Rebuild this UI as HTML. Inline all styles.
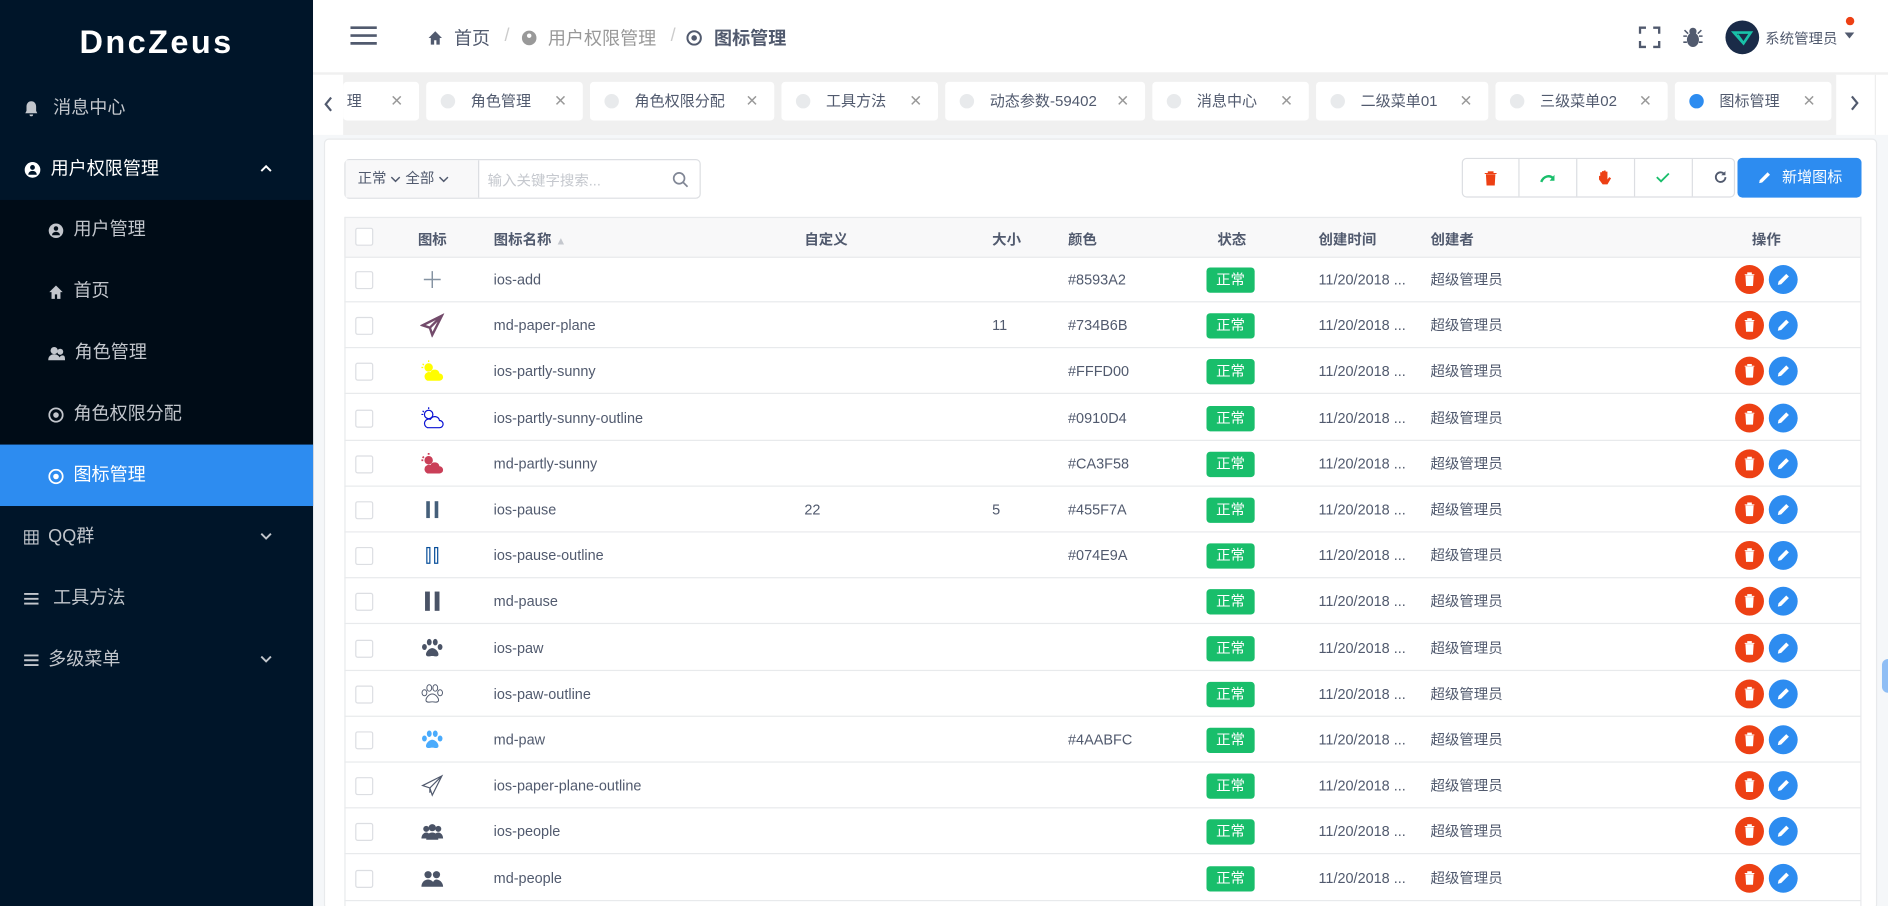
<!DOCTYPE html>
<html><head><meta charset="utf-8"><style>
*{box-sizing:border-box;margin:0;padding:0}
html,body{width:1888px;height:906px;overflow:hidden;background:#f5f7f9}
body{font-family:"Liberation Sans","Noto Sans CJK SC",sans-serif;color:#515a6e}
#w{width:1568px;height:752px;transform:scale(1.20408,1.2048);transform-origin:0 0;position:relative;background:#f5f7f9}
.abs{position:absolute}
#side{left:0;top:0;width:260px;height:752px;background:#001529}
.logo{position:absolute;top:20px;width:260px;text-align:center;color:#fff;font-weight:bold;font-size:27px;letter-spacing:2px}
.mi{position:absolute;left:0;width:260px;height:51px;line-height:51px;color:#c2c6cc;font-size:15px;padding-left:20px}
.mi svg{vertical-align:middle;margin-right:8px}
.sub{position:absolute;left:0;top:166px;width:260px;height:254px;background:#000c17}
.si{padding-left:40px}
.act{background:#2d8cf0;color:#fff}
.car{position:absolute;left:216px;top:21px;margin:0!important}
#hdr{left:260px;top:0;width:1308px;height:60px;background:#fff}
.bc{position:absolute;top:21px;font-size:15px;color:#515a6e}
#tags{left:260px;top:60px;width:1308px;height:52px;background:#f0f0f0}
.tab{position:absolute;top:8px;height:32px;background:#fff;border-radius:3px;font-size:12.5px;color:#515a6e;line-height:32px}
.tab .d{position:absolute;left:12px;top:10px;width:12px;height:12px;border-radius:50%;background:#e8eaec}
.tab .x{position:absolute;right:13px;top:0;color:#999;font-size:13px}
#card{left:269px;top:115px;width:1290px;height:640px;background:#fff;border:1px solid #e8eaec;border-radius:4px}
.th{position:absolute;font-size:12px;font-weight:bold;color:#515a6e}
.row{position:absolute;left:286px;width:1260px;height:38px;border-bottom:1px solid #e8eaec}
.c{position:absolute;top:0;line-height:38px;font-size:12px;color:#515a6e;white-space:nowrap}
.cb{position:absolute;left:9px;top:12px;width:15px;height:15px;border:1px solid #dcdee2;border-radius:2px;background:#fff}
.tag{position:absolute;left:716px;top:9px;width:40px;height:21px;background:#19be6b;color:#fff;font-size:12px;line-height:21px;text-align:center;border-radius:3px}
.bd,.be{position:absolute;top:7px;width:24px;height:24px;border-radius:50%}
.bd{left:1155px;background:#ed4014}.be{left:1183px;background:#2d8cf0}
.ic{position:absolute;left:63px;top:9px}
</style></head><body><div id="w">
<div id="side" class="abs">
<div class="logo">DncZeus</div>
<div class="mi" style="top:64px"><svg width="12" height="14" viewBox="0 0 12 14"><path d="M6 1c-2.5 0-4 2-4 4.5V9L1 11h10L10 9V5.5C10 3 8.5 1 6 1zM4.5 12a1.5 1.5 0 0 0 3 0z" fill="#c2c6cc"/></svg>&nbsp;消息中心</div>
<div class="mi" style="top:115px;color:#fff"><svg width="14" height="14" viewBox="0 0 14 14"><circle cx="7" cy="7" r="6.5" fill="#fff"/><circle cx="7" cy="5" r="2" fill="#001529"/><path d="M3.5 11c0-2 1.5-3.2 3.5-3.2s3.5 1.2 3.5 3.2z" fill="#001529"/></svg>用户权限管理<svg class="car" width="10" height="8" viewBox="0 0 10 8"><path d="M1 6l4-4 4 4" fill="none" stroke="#fff" stroke-width="1.6"/></svg></div>
<div class="sub"></div>
<div class="mi si" style="top:165px"><svg width="13" height="13" viewBox="0 0 14 14"><circle cx="7" cy="7" r="6.5" fill="#c2c6cc"/><circle cx="7" cy="5" r="2" fill="#000c17"/><path d="M3.5 11c0-2 1.5-3 3.5-3s3.5 1 3.5 3z" fill="#000c17"/></svg>用户管理</div>
<div class="mi si" style="top:216px"><svg width="13" height="13" viewBox="0 0 14 14"><path d="M7 1L1 7h2v6h3V9h2v4h3V7h2z" fill="#c2c6cc"/></svg>首页</div>
<div class="mi si" style="top:267px"><svg width="14" height="13" viewBox="0 0 14 13"><circle cx="5" cy="4" r="3" fill="#c2c6cc"/><circle cx="10" cy="5" r="2.5" fill="#c2c6cc"/><path d="M0 12c0-3 2-5 5-5s5 2 5 5zM9 12c0-2 1-4 3-4s2 2 2 4z" fill="#c2c6cc"/></svg>角色管理</div>
<div class="mi si" style="top:318px"><svg width="13" height="13" viewBox="0 0 14 14"><circle cx="7" cy="7" r="6" fill="none" stroke="#c2c6cc" stroke-width="1.6"/><circle cx="7" cy="7" r="2.5" fill="#c2c6cc"/></svg>角色权限分配</div>
<div class="mi si act" style="top:369px"><svg width="13" height="13" viewBox="0 0 14 14"><circle cx="7" cy="7" r="6" fill="none" stroke="#fff" stroke-width="1.6"/><circle cx="7" cy="7" r="2.5" fill="#fff"/></svg>图标管理</div>
<div class="mi" style="top:420px"><svg width="12" height="12" viewBox="0 0 12 12"><path d="M0.5 0.5h11v11h-11zM4 0.5v11M8 0.5v11M0.5 4h11M0.5 8h11" fill="none" stroke="#c2c6cc"/></svg>QQ群<svg class="car" width="10" height="8" viewBox="0 0 10 8"><path d="M1 2l4 4 4-4" fill="none" stroke="#c2c6cc" stroke-width="1.6"/></svg></div>
<div class="mi" style="top:471px"><svg width="12" height="10" viewBox="0 0 12 10"><path d="M0 1h12M0 5h12M0 9h12" stroke="#c2c6cc" stroke-width="1.6"/></svg>&nbsp;工具方法</div>
<div class="mi" style="top:522px"><svg width="12" height="10" viewBox="0 0 12 10"><path d="M0 1h12M0 5h12M0 9h12" stroke="#c2c6cc" stroke-width="1.6"/></svg>多级菜单<svg class="car" width="10" height="8" viewBox="0 0 10 8"><path d="M1 2l4 4 4-4" fill="none" stroke="#c2c6cc" stroke-width="1.6"/></svg></div>
</div>
<div id="hdr" class="abs">
<svg class="abs" style="left:31px;top:21px" width="22" height="17" viewBox="0 0 22 17"><path d="M0 2h22M0 8.5h22M0 15h22" stroke="#515a6e" stroke-width="2.2"/></svg>
<svg class="abs" style="left:95px;top:25px" width="13" height="13" viewBox="0 0 14 14"><path d="M7 1L1 7h2v6h3V9h2v4h3V7h2z" fill="#515a6e"/></svg>
<span class="bc" style="left:117px">首页</span><span class="bc" style="left:159px;color:#ccc">/</span>
<svg class="abs" style="left:173px;top:25px" width="13" height="13" viewBox="0 0 14 14"><circle cx="7" cy="7" r="6.5" fill="#999"/><circle cx="7" cy="5" r="2" fill="#fff"/></svg>
<span class="bc" style="left:195px;color:#999">用户权限管理</span><span class="bc" style="left:297px;color:#ccc">/</span>
<svg class="abs" style="left:310px;top:25px" width="13" height="13" viewBox="0 0 14 14"><circle cx="7" cy="7" r="6" fill="none" stroke="#515a6e" stroke-width="1.8"/><circle cx="7" cy="7" r="2.5" fill="#515a6e"/></svg>
<span class="bc" style="left:333px;font-weight:bold">图标管理</span>
<svg class="abs" style="left:1101px;top:22px" width="18" height="18" viewBox="0 0 18 18"><path d="M1 6V1h5M12 1h5v5M17 12v5h-5M6 17H1v-5" fill="none" stroke="#515a6e" stroke-width="2"/></svg>
<svg class="abs" style="left:1137px;top:22px" width="18" height="18" viewBox="0 0 18 18"><ellipse cx="9" cy="11" rx="5" ry="6" fill="#515a6e"/><circle cx="9" cy="4" r="3" fill="#515a6e"/><path d="M1 8h3M14 8h3M1 13h3M14 13h3M2 3l3 3M16 3l-3 3" stroke="#515a6e" stroke-width="1.3"/></svg>
<div class="abs" style="left:1173px;top:17px;width:28px;height:28px;border-radius:50%;background:#1a2b48"><svg width="28" height="28" viewBox="0 0 28 28"><path d="M7 10h14l-6 9zM10 12l5 7" fill="none" stroke="#19c2a8" stroke-width="2.2"/></svg></div>
<span class="abs" style="left:1206px;top:23px;font-size:12px;color:#515a6e">系统管理员</span>
<span class="abs" style="left:1273px;top:14px;width:7px;height:7px;border-radius:50%;background:#ed4014"></span>
<span class="abs" style="left:1272px;top:27px;width:0;height:0;border:4px solid transparent;border-top:5px solid #515a6e"></span>
</div>
<div id="tags" class="abs">
<div class="abs" style="left:0;top:2px;width:25px;height:50px;background:#fff"><svg class="abs" style="left:9px;top:18px" width="8" height="13" viewBox="0 0 8 13"><path d="M6 1L1.5 6.5 6 12" fill="none" stroke="#515a6e" stroke-width="1.8"/></svg></div>
<div class="tab" style="left:25px;width:63px;padding-left:3px">理<span class="x">✕</span></div>
<div class="tab" style="left:94px;width:130px;padding-left:37px"><i class="d"></i>角色管理<span class="x">✕</span></div>
<div class="tab" style="left:230px;width:153px;padding-left:37px"><i class="d"></i>角色权限分配<span class="x">✕</span></div>
<div class="tab" style="left:389px;width:130px;padding-left:37px"><i class="d"></i>工具方法<span class="x">✕</span></div>
<div class="tab" style="left:525px;width:166px;padding-left:37px"><i class="d"></i>动态参数-59402<span class="x">✕</span></div>
<div class="tab" style="left:697px;width:130px;padding-left:37px"><i class="d"></i>消息中心<span class="x">✕</span></div>
<div class="tab" style="left:833px;width:143px;padding-left:37px"><i class="d"></i>二级菜单01<span class="x">✕</span></div>
<div class="tab" style="left:982px;width:143px;padding-left:37px"><i class="d"></i>三级菜单02<span class="x">✕</span></div>
<div class="tab" style="left:1131px;width:130px;padding-left:37px"><i class="d" style="background:#2d8cf0"></i>图标管理<span class="x">✕</span></div>
<div class="abs" style="left:1264px;top:2px;width:44px;height:50px;background:#fff;border-left:1px solid #f0f0f0"><svg class="abs" style="left:11px;top:17px" width="8" height="13" viewBox="0 0 8 13"><path d="M2 1l4.5 5.5L2 12" fill="none" stroke="#515a6e" stroke-width="1.8"/></svg><div class="abs" style="left:32px;top:0;width:1px;height:50px;background:#eee"></div></div>
</div>
<div id="card" class="abs"></div>
<div class="abs" style="left:286px;top:132px;width:296px;height:33px;border:1px solid #dcdee2;border-radius:4px;background:#fff">
<div class="abs" style="left:0;top:0;width:111px;height:31px;background:#f8f8f9;border-right:1px solid #dcdee2;font-size:12px;line-height:31px;padding-left:10px;color:#515a6e">正常 <svg width="9" height="6" viewBox="0 0 9 6"><path d="M1 1l3.5 3.5L8 1" fill="none" stroke="#515a6e" stroke-width="1.2"/></svg> 全部 <svg width="9" height="6" viewBox="0 0 9 6"><path d="M1 1l3.5 3.5L8 1" fill="none" stroke="#515a6e" stroke-width="1.2"/></svg></div>
<span class="abs" style="left:118px;top:8px;font-size:12px;color:#c5c8ce">输入关键字搜索...</span>
<svg class="abs" style="left:271px;top:9px" width="14" height="14" viewBox="0 0 14 14"><circle cx="6" cy="6" r="4.5" fill="none" stroke="#808695" stroke-width="1.4"/><path d="M9.5 9.5l3.5 3.5" stroke="#808695" stroke-width="1.4"/></svg>
</div>
<div class="abs" style="left:1214px;top:131px;width:227px;height:33px;border:1px solid #dcdee2;border-radius:4px;background:#fff">
<div class="abs" style="left:46px;top:0;width:1px;height:31px;background:#dcdee2"></div><div class="abs" style="left:94px;top:0;width:1px;height:31px;background:#dcdee2"></div><div class="abs" style="left:142px;top:0;width:1px;height:31px;background:#dcdee2"></div><div class="abs" style="left:190px;top:0;width:1px;height:31px;background:#dcdee2"></div>
<svg class="abs" style="left:18px;top:10px" width="10" height="12" viewBox="0 0 10 12"><path d="M0 2h10M3 2V0.5h4V2M1.5 3h7l-.5 9h-6z" fill="#ed4014" stroke="#ed4014" stroke-width=".8"/></svg>
<svg class="abs" style="left:64px;top:11px" width="13" height="9" viewBox="0 0 13 9"><path d="M1 8c2-5 7-6 10-3" fill="none" stroke="#19be6b" stroke-width="2"/><path d="M12 2v5H8z" fill="#19be6b"/></svg>
<svg class="abs" style="left:112px;top:9px" width="12" height="14" viewBox="0 0 12 14"><path d="M2 5V2h1.5v4V1h1.5v5V.5h1.5V6V1.5H8V8l1.5-2L11 7l-3 5H4L1 8V5z" fill="#ed4014"/></svg>
<svg class="abs" style="left:160px;top:11px" width="12" height="9" viewBox="0 0 12 9"><path d="M1 4l3.5 3.5L11 1" fill="none" stroke="#19be6b" stroke-width="1.5"/></svg>
<svg class="abs" style="left:208px;top:9px" width="12" height="12" viewBox="0 0 12 12"><path d="M10 6a4 4 0 1 1-1.5-3.1" fill="none" stroke="#515a6e" stroke-width="1.5"/><path d="M10 1v3.5H6.5z" fill="#515a6e"/></svg>
</div>
<div class="abs" style="left:1443px;top:131px;width:103px;height:33px;background:#2d8cf0;border-radius:4px;color:#fff;font-size:12.5px;line-height:33px;padding-left:37px"><svg class="abs" style="left:17px;top:11px" width="11" height="11" viewBox="0 0 11 11"><path d="M1 10l.5-2.5L8 1l2 2-6.5 6.5z" fill="#fff"/></svg>新增图标</div>
<div class="abs" style="left:286px;top:180px;width:1260px;height:34px;background:#f8f8f9;border:1px solid #e8eaec;border-bottom:1px solid #e8eaec"></div>
<div class="abs" style="left:286px;top:180px;width:1px;height:572px;background:#e8eaec"></div>
<div class="abs" style="left:1545px;top:180px;width:1px;height:572px;background:#e8eaec"></div>
<div class="cb" style="left:295px;top:189px"></div>
<span class="th" style="left:347px;top:190px">图标</span>
<span class="th" style="left:410px;top:190px">图标名称 <span style="color:#c5c8ce;font-size:9px">&#9650;</span></span>
<span class="th" style="left:668px;top:190px">自定义</span>
<span class="th" style="left:824px;top:190px">大小</span>
<span class="th" style="left:887px;top:190px">颜色</span>
<span class="th" style="left:1011px;top:190px">状态</span>
<span class="th" style="left:1095px;top:190px">创建时间</span>
<span class="th" style="left:1188px;top:190px">创建者</span>
<span class="th" style="left:1455px;top:190px">操作</span>
<div id="rows"></div>
<div class="abs" style="left:1563px;top:547px;width:10px;height:28px;border-radius:14px;background:#8fbef5"></div>
</div>
<script>
var I={
add:'<path d="M10 3v14M3 10h14" stroke="#8593A2" stroke-width="1.2"/>',
pp:'<path d="M18 2L2 10l6 2 2 6zM18 2L8 12" fill="none" stroke="#734B6B" stroke-width="2"/>',
ps:'<circle cx="7" cy="7" r="3.5" fill="#FFFD00"/><path d="M7 1v1.5M2 4l1 1M1 7h1.5" stroke="#FFFD00"/><path d="M6 18h10a3 3 0 0 0 0-6 4 4 0 0 0-7.5-1A3.5 3.5 0 0 0 6 18z" fill="#FFFD00"/>',
pso:'<circle cx="7" cy="7" r="3.5" fill="none" stroke="#0910D4"/><path d="M7 1v1.5M2 4l1 1M1 7h1.5" stroke="#0910D4"/><path d="M6 18h10a3 3 0 0 0 0-6 4 4 0 0 0-7.5-1A3.5 3.5 0 0 0 6 18z" fill="#fff" stroke="#0910D4"/>',
mps:'<circle cx="7" cy="7" r="3.5" fill="#CA3F58"/><path d="M7 1v1.5M2 4l1 1M1 7h1.5" stroke="#CA3F58" stroke-width="1.5"/><path d="M6 18h10a3 3 0 0 0 0-6 4 4 0 0 0-7.5-1A3.5 3.5 0 0 0 6 18z" fill="#CA3F58"/>',
pa:'<rect x="5" y="3" width="3" height="14" fill="#455F7A"/><rect x="12" y="3" width="3" height="14" fill="#455F7A"/>',
pao:'<rect x="5.5" y="3.5" width="2.5" height="13" fill="none" stroke="#074E9A"/><rect x="12" y="3.5" width="2.5" height="13" fill="none" stroke="#074E9A"/>',
mpa:'<rect x="4" y="2" width="4" height="16" fill="#4a5366"/><rect x="12" y="2" width="4" height="16" fill="#4a5366"/>',
paw:function(c,o){var f=o?'fill="none" stroke="'+c+'" stroke-width=".8"':'fill="'+c+'"';return '<ellipse cx="3.5" cy="9" rx="2" ry="2.5" '+f+'/><ellipse cx="7.5" cy="5" rx="2" ry="2.7" '+f+'/><ellipse cx="12.5" cy="5" rx="2" ry="2.7" '+f+'/><ellipse cx="16.5" cy="9" rx="2" ry="2.5" '+f+'/><path d="M10 10c-3 0-6 4-5 6 1 1.5 3 .5 5 .5s4 1 5-.5c1-2-2-6-5-6z" '+f+'/>'},
ppo:'<path d="M18 2L2 10l6 2 2 6zM18 2L8 12v4" fill="none" stroke="#515a6e" stroke-width="1"/>',
pe:'<circle cx="5" cy="8" r="2.5" fill="#4a5366"/><circle cx="10" cy="7" r="3" fill="#4a5366"/><circle cx="15" cy="8" r="2.5" fill="#4a5366"/><path d="M1 16c0-3 2-5 4-5s4 2 4 5zM5 17c0-4 2-6 5-6s5 2 5 6zM11 16c0-3 2-5 4-5s4 2 4 5z" fill="#4a5366"/>',
mpe:'<circle cx="6.5" cy="7" r="3" fill="#4a5366"/><circle cx="13.5" cy="7" r="3" fill="#4a5366"/><path d="M1 17c0-4 3-6 5.5-6s5.5 2 5.5 6zM10 17c0-4 1.5-6 3.5-6S19 13 19 17z" fill="#4a5366"/>'};
var R=[['add','ios-add','','','#8593A2'],['pp','md-paper-plane','','11','#734B6B'],['ps','ios-partly-sunny','','','#FFFD00'],['pso','ios-partly-sunny-outline','','','#0910D4'],['mps','md-partly-sunny','','','#CA3F58'],['pa','ios-pause','22','5','#455F7A'],['pao','ios-pause-outline','','','#074E9A'],['mpa','md-pause','','',''],['paw1','ios-paw','','',''],['paw2','ios-paw-outline','','',''],['paw3','md-paw','','','#4AABFC'],['ppo','ios-paper-plane-outline','','',''],['pe','ios-people','','',''],['mpe','md-people','','','']];
var h='';R.forEach(function(r,i){var ic=r[0]=='paw1'?I.paw('#4a5366'):r[0]=='paw2'?I.paw('#515a6e',1):r[0]=='paw3'?I.paw('#4AABFC'):I[r[0]];
h+='<div class="row" style="top:'+(213+i*38.2)+'px"><div class="cb"></div><svg class="ic" width="20" height="20" viewBox="0 0 20 20">'+ic+'</svg><span class="c" style="left:124px">'+r[1]+'</span><span class="c" style="left:382px">'+r[2]+'</span><span class="c" style="left:538px">'+r[3]+'</span><span class="c" style="left:601px">'+r[4]+'</span><div class="tag">正常</div><span class="c" style="left:809px">11/20/2018 ...</span><span class="c" style="left:902px">超级管理员</span><div class="bd"><svg width="24" height="24" viewBox="0 0 24 24"><path d="M8 8h8M10.5 8V6.5h3V8M9 9h6l-.5 8h-5z" fill="#fff" stroke="#fff" stroke-width=".8"/></svg></div><div class="be"><svg width="24" height="24" viewBox="0 0 24 24"><path d="M7.5 16.5l.6-2.8L14.5 7.3l2.2 2.2-6.4 6.4z" fill="#fff"/></svg></div></div>';});
document.getElementById('rows').innerHTML=h;
</script>
</body></html>
